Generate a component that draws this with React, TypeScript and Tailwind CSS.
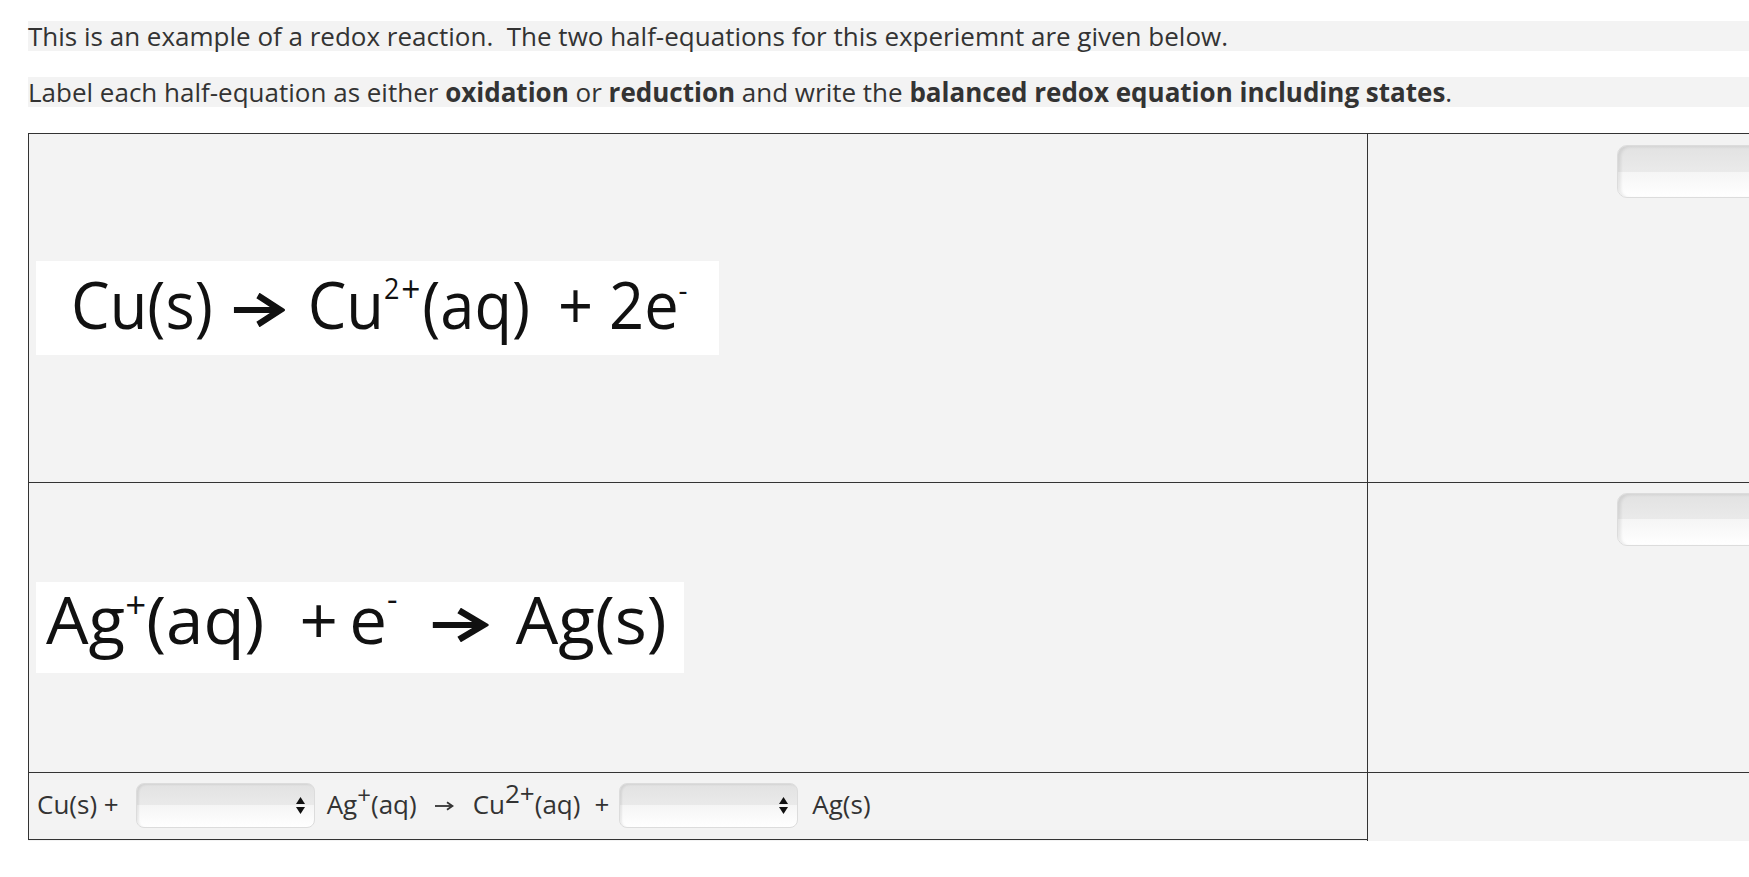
import React from "react";

function SelectArrows() {
  return (
    <svg width="9" height="17" viewBox="0 0 9 17" className="shrink-0">
      <polygon points="4.5,0 9,7 0,7" fill="#111" />
      <polygon points="0,10 9,10 4.5,17" fill="#111" />
    </svg>
  );
}

const fieldBg =
  "bg-[linear-gradient(to_bottom,#e2e2e2_0%,#eaeaea_50%,#f5f5f5_50%,#ffffff_100%)]";

function FakeSelect() {
  return (
    <div
      className={`w-[179px] h-[45px] rounded-[8px] border border-[#dcdcdc] ${fieldBg} shadow-[inset_2px_1px_2px_rgba(0,0,0,0.07)] flex items-center justify-end pr-[9px] shrink-0`}
    >
      <SelectArrows />
    </div>
  );
}

function FakeInput() {
  return (
    <div
      className={`w-[300px] h-[53px] rounded-[10px] border border-[#dcdcdc] ${fieldBg} shadow-[inset_3px_1px_3px_rgba(0,0,0,0.08)]`}
    />
  );
}

function BigArrow() {
  return (
    <svg width="55" height="34" viewBox="0 0 55 34" className="inline-block align-[2px]">
      <path d="M0 17 H49" stroke="#111" strokeWidth="6" fill="none" />
      <path d="M26 2.5 L50 17 L26 31.5" stroke="#111" strokeWidth="6.5" fill="none" strokeLinejoin="miter" />
    </svg>
  );
}

function SmallArrow() {
  return (
    <svg width="19" height="10" viewBox="0 0 19 10" className="shrink-0">
      <path d="M0 5 H16" stroke="#333" strokeWidth="1.8" fill="none" />
      <path d="M12 1.2 L17.5 5 L12 8.8" stroke="#333" strokeWidth="1.8" fill="none" />
    </svg>
  );
}

export default function App() {
  return (
    <div className="w-full min-h-[877px] bg-white overflow-hidden font-['Open_Sans',sans-serif] text-[#333]">
      <div className="pl-[28px] pt-[21px] flex flex-col gap-[26px]">
        <p className="bg-[#f3f3f3] text-[26px] leading-[30px] whitespace-pre">
          This is an example of a redox reaction.  The two half-equations for this experiemnt are given below.
        </p>
        <p className="bg-[#f3f3f3] text-[26px] leading-[30px] whitespace-pre">
          Label each half-equation as either <b className="font-bold">oxidation</b> or{" "}
          <b className="font-bold">reduction</b> and write the{" "}
          <b className="font-bold">balanced redox equation including states</b>.
        </p>

        <div className="grid grid-cols-[1339px_700px] w-[2039px] bg-[#f3f3f3]">
          {/* Row 1 */}
          <div className="h-[349px] border-l border-t border-[#333] flex items-center pl-[7px]">
            <div className="w-[683px] h-[94px] bg-white pl-[35px] pt-[9px] text-[#111]">
              <div className="origin-left scale-x-[0.93] whitespace-pre text-[66px] leading-none">
                <span>Cu(s)</span>
                <span className="ml-[23px] mr-[24px]">
                  <BigArrow />
                </span>
                <span>Cu</span>
                <span className="text-[29px] leading-[0] align-[30px] tracking-[2px]">2</span>
                <span className="text-[36px] leading-[0] align-[27px] mr-[2px]">+</span>
                <span>(aq)</span>
                <span className="ml-[30px]">+ 2e</span>
                <span className="text-[30px] leading-[0] align-[28px]">-</span>
              </div>
            </div>
          </div>
          <div className="h-[349px] border-l border-t border-[#333] pl-[249px] pt-[11px]">
            <FakeInput />
          </div>

          {/* Row 2 */}
          <div className="h-[290px] border-l border-t border-[#333] flex items-center pl-[7px]">
            <div className="w-[648px] h-[91px] bg-white pl-[10px] pt-[3px] text-[#111]">
              <div className="origin-left scale-x-[1.02] whitespace-pre text-[66px] leading-none">
                <span>Ag</span>
                <span className="text-[36px] leading-[0] align-[26px]">+</span>
                <span>(aq)  +</span>
                <span className="ml-[11px]">e</span>
                <span className="text-[32px] leading-[0] align-[33px]">-</span>
                <span className="ml-[34px] mr-[27px]">
                  <BigArrow />
                </span>
                <span>Ag(s)</span>
              </div>
            </div>
          </div>
          <div className="h-[290px] border-l border-t border-[#333] pl-[249px] pt-[10px]">
            <FakeInput />
          </div>

          {/* Row 3 */}
          <div className="h-[68px] border-l border-t border-b border-[#333] flex items-center pl-[8px] pb-[1px] text-[26px] leading-[30px] whitespace-pre">
            <span className="mb-[4px]">Cu(s) +</span>
            <span className="ml-[17px]">
              <FakeSelect />
            </span>
            <span className="ml-[12px] mb-[4px]">
              Ag<span className="text-[24px] leading-[0] align-[10px]">+</span>(aq)
            </span>
            <span className="ml-[18px]">
              <SmallArrow />
            </span>
            <span className="ml-[19px] mb-[4px]">
              Cu<span className="text-[26px] leading-[0] align-[11px]">2+</span>(aq)
            </span>
            <span className="ml-[14px] mb-[4px]">+</span>
            <span className="ml-[10px]">
              <FakeSelect />
            </span>
            <span className="ml-[14px] mb-[4px]">Ag(s)</span>
          </div>
          <div className="h-[69px] border-l border-t border-[#333]" />
        </div>
      </div>
    </div>
  );
}
